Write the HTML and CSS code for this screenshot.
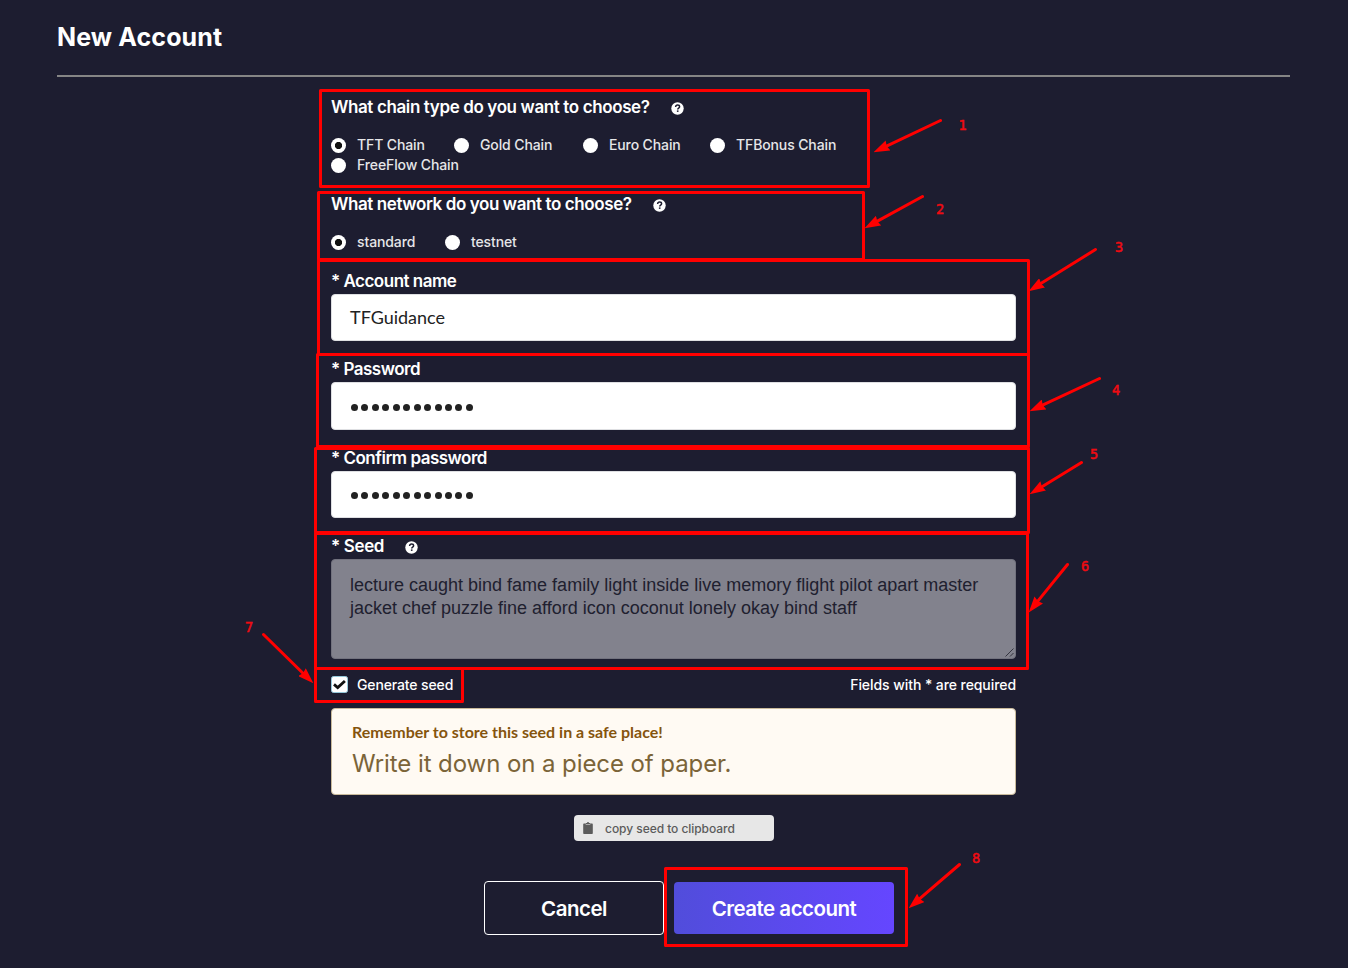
FILE: index.html
```html
<!DOCTYPE html>
<html lang="en">
<head>
<meta charset="utf-8">
<title>New Account</title>
<link rel="stylesheet" href="styles.css">
</head>
<body>
<svg class="defs" width="0" height="0" aria-hidden="true">
  <symbol id="help" viewBox="0 0 13 13">
    <circle cx="6.5" cy="6.5" r="6.2" fill="#fff"/>
    <path d="M4.6 5C4.7 3.7 5.5 3.1 6.6 3.1S8.6 3.8 8.6 4.8C8.6 6.1 6.7 6.1 6.7 7.5" fill="none" stroke="#1d1d30" stroke-width="1.5"/>
    <rect x="5.9" y="8.4" width="1.6" height="1.5" fill="#1d1d30"/>
  </symbol>
</svg>
<header class="page-header"><h1>New Account</h1></header>
<form class="form">
  <div class="label chain"><span>What chain type do you want to choose?</span><svg class="help"><use href="#help"/></svg></div>
  <div class="options chains">
    <span class="option on"><i></i><span>TFT Chain</span></span>
    <span class="option"><i></i><span>Gold Chain</span></span>
    <span class="option"><i></i><span>Euro Chain</span></span>
    <span class="option"><i></i><span>TFBonus Chain</span></span>
    <span class="option"><i></i><span>FreeFlow Chain</span></span>
  </div>
  <div class="label network"><span>What network do you want to choose?</span><svg class="help"><use href="#help"/></svg></div>
  <div class="options networks">
    <span class="option on"><i></i><span>standard</span></span>
    <span class="option"><i></i><span>testnet</span></span>
  </div>
  <div class="label account">* Account name</div>
  <div class="field name">TFGuidance</div>
  <div class="label password">* Password</div>
  <div class="field tall dots"><i></i><i></i><i></i><i></i><i></i><i></i><i></i><i></i><i></i><i></i><i></i><i></i></div>
  <div class="label confirm">* Confirm password</div>
  <div class="field dots"><i></i><i></i><i></i><i></i><i></i><i></i><i></i><i></i><i></i><i></i><i></i><i></i></div>
  <div class="label seed-label"><span>* Seed</span><svg class="help"><use href="#help"/></svg></div>
  <div class="seed">
    <p>lecture caught bind fame family light inside live memory flight pilot apart master</p>
    <p>jacket chef puzzle fine afford icon coconut lonely okay bind staff</p>
    <svg class="grip" viewBox="0 0 9 9"><path d="M.5 8.5 8.5.5M5 8.5 8.5 5" fill="none" stroke="#34343f"/></svg>
  </div>
  <div class="generate">
    <svg class="check" viewBox="0 0 17 17"><rect x=".5" y=".5" width="16" height="16" rx="2" fill="#fff" stroke="#96c8da"/><path d="m3 8.400 3.700 3.200 7.200-6.700" fill="none" stroke="#111" stroke-width="2.800"/></svg>
    <span class="generate-text">Generate seed</span>
    <span class="required">Fields with * are required</span>
  </div>
  <div class="message">
    <strong>Remember to store this seed in a safe place!</strong>
    <p>Write it down on a piece of paper.</p>
  </div>
  <div class="copy">
    <svg viewBox="0 0 10 12"><path d="M1 1.500h2V1h1a1 1 0 0 1 2 0h1v.5h2q.8 0 .8.8v8.900q0 .8-.8.8H1q-.8 0-.8-.8V2.300Q.2 1.500 1 1.500Z" fill="#5b5b5b"/><path d="M2.700 2.500h4.600" stroke="#aaa" fill="none"/></svg>
    <span>copy seed to clipboard</span>
  </div>
  <div class="buttons">
    <button type="button" class="button cancel">Cancel</button>
    <button type="button" class="button create">Create account</button>
  </div>
</form>
<svg class="notes" viewBox="0 0 1348 968">
  <defs><marker id="head" viewBox="0 0 16 11" refX="15.500" refY="5.500" markerWidth="16" markerHeight="11" markerUnits="userSpaceOnUse" orient="auto"><path d="M16 5.500 0 0 1.500 5.500 0 11Z" fill="red"/></marker></defs>
  <g fill="none" stroke="red" stroke-width="3" stroke-linejoin="round">
    <rect x="320.500" y="90.500" width="548" height="96"/>
    <rect x="318.500" y="192.500" width="545" height="67"/>
    <rect x="318.500" y="260.500" width="710" height="94"/>
    <rect x="317.500" y="354.500" width="711" height="92"/>
    <rect x="315.500" y="448.500" width="713" height="84"/>
    <rect x="315.500" y="533.500" width="712" height="135"/>
    <rect x="315.500" y="668.500" width="147" height="33"/>
    <rect x="665.500" y="868.500" width="241" height="77"/>
  </g>
  <path d="M940.500 120.500 886 146.300M922.500 196.500 877 221.400M1095.500 249.500 1040 284.100M1099.500 378.500 1042 405.400M1081.500 462.500 1042 486.700M1067.500 564.500 1037 602.100M263.500 634.500 304 674.200M959.500 864.500 918 900.200" stroke="red" stroke-width="3" stroke-linecap="round"/>
  <g stroke="transparent" marker-end="url(#head)">
    <path d="M940.500 120.500 874 152"/>
    <path d="M922.500 196.500 865 228"/>
    <path d="M1095.500 249.500 1029 291"/>
    <path d="M1099.500 378.500 1030 411"/>
    <path d="M1081.500 462.500 1030 494"/>
    <path d="M1067.500 564.500 1029 612"/>
    <path d="M263.500 634.500 313 683"/>
    <path d="M959.500 864.500 909 908"/>
  </g>
  <g class="numbers">
    <text x="958.500" y="130">1</text><text x="936" y="214">2</text><text x="1115" y="252">3</text><text x="1112" y="395">4</text>
    <text x="1090" y="459">5</text><text x="1081" y="571">6</text><text x="245" y="632">7</text><text x="972" y="863">8</text>
  </g>
</svg>
</body>
</html>
```
FILE: styles.css
```css
* { box-sizing: border-box; }
body { position: relative; margin: 0; width: 1348px; height: 968px; overflow: hidden; background: #1d1d30; color: #fff; font-family: Inter, "Liberation Sans", sans-serif; }
p, h1 { margin: 0; }
.defs { display: block; height: 0; }
.page-header { margin: 0 58px 0 57px; height: 77px; border-bottom: 2px solid #858585; }
h1 { padding-top: 20px; font-size: 25px; line-height: 34px; font-weight: 700; letter-spacing: .12px; white-space: nowrap; }
.form { width: 685px; margin-left: 331px; display: flex; flex-direction: column; }
.label { display: flex; align-items: center; height: 24px; padding-top: 1px; font-size: 17px; line-height: 24px; font-weight: 600; white-space: nowrap; letter-spacing: -.5px; }
.help { width: 13px; height: 13px; margin: 3px 0 0 21px; }
.chain { margin-top: 17px; letter-spacing: -.38px; }
.options { display: flex; flex-wrap: wrap; font-size: 14px; line-height: 20px; color: #e6e6e8; font-weight: 500; letter-spacing: -.12px; white-space: nowrap; }
.option { display: flex; align-items: center; height: 20px; margin-right: 30px; }
.option i { flex: none; width: 15px; height: 15px; margin-right: 11px; border-radius: 50%; background: #fff; }
.option.on i { background: radial-gradient(circle, #111 3.200px, #fff 4px); }
.chains { margin-top: 17px; height: 40px; }
.chains .option:first-child { width: 93px; }
.chains .option:nth-child(2) { width: 99px; }
.chains .option:nth-child(3) { width: 97px; }
.network { margin-top: 16px; letter-spacing: -.4px; }
.networks { margin-top: 17px; }
.networks .option:first-child { width: 84px; }
.account { margin-top: 16px; }
.field { height: 47px; margin-top: 2px; padding: 0 19px; border: 1px solid #dedfe2; border-radius: 4px; background: #fff; color: #222; display: flex; align-items: center; font: 18px Lato, sans-serif; }
.name { padding: 0 18px 2px; }
.field.tall { height: 48px; }
.password, .confirm, .seed-label { margin-top: 15px; }
.seed-label { letter-spacing: -.35px; }
.dots { gap: 3.450px; padding-top: 2px; }
.dots i { width: 7px; height: 7px; border-radius: 50%; background: #222; }
.dots.tall { padding-top: 3px; }
.seed { position: relative; height: 100px; margin-top: 2px; padding: 14px 18px; border: 1px solid #72727e; border-radius: 4px; background: #82828d; color: #20202f; font: 18px/23px "Liberation Sans", sans-serif; white-space: nowrap; }
.grip { position: absolute; right: 1px; bottom: 1px; width: 9px; height: 9px; }
.generate { display: flex; align-items: center; height: 20px; margin-top: 15px; font-size: 14px; font-weight: 500; letter-spacing: -.13px; white-space: nowrap; }
.check { width: 17px; height: 17px; margin-right: 9px; }
.required { margin-left: auto; padding-top: 1px; letter-spacing: -.07px; }
.message { height: 87px; margin-top: 14px; padding: 14px 20px; border: 1px solid #c9ba9b; border-radius: 4px; background: #fffaf3; color: #7b6438; white-space: nowrap; }
.message strong { display: block; color: #85540d; font: bold 16px/18px Lato, sans-serif; }
.message p { margin-top: 8px; font-size: 24px; line-height: 30px; letter-spacing: -.08px; }
.copy { width: 200px; height: 26px; margin: 20px 0 0 243px; padding-left: 9px; display: flex; align-items: center; border-radius: 4px; background: #e7e7e7; color: #5b5b5b; font-size: 12px; font-weight: 500; letter-spacing: -.05px; white-space: nowrap; }
.copy svg { width: 10px; height: 12px; margin-right: 12px; }
.buttons { display: flex; align-items: center; gap: 10px; margin: 40px 0 0 153px; }
.button { padding: 0; width: 180px; height: 54px; color: #fff; border: 1px solid #fff; border-radius: 4px; background: none; font: 600 20.500px Inter, sans-serif; letter-spacing: -.5px; white-space: nowrap; }
.create { width: 220px; height: 52px; border: 0; background: linear-gradient(90deg, #514ddb, #6546ff); }
.notes { position: absolute; left: 0; top: 0; width: 1348px; height: 968px; }
.numbers { fill: #f00b12; stroke: #f00b12; stroke-width: .5px; font: 13.500px "DejaVu Sans Mono", monospace; }
```
